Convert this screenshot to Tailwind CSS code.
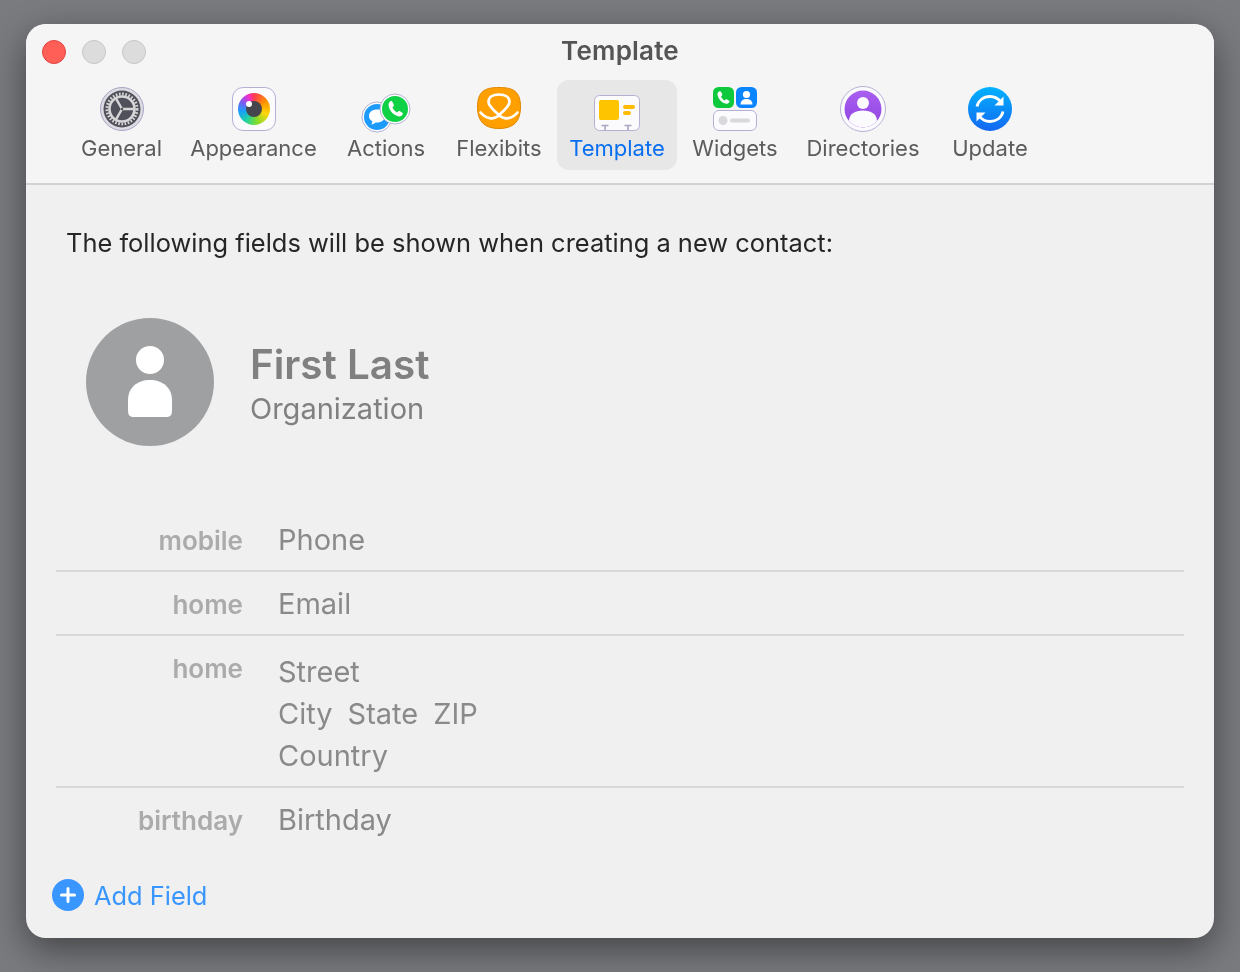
<!DOCTYPE html>
<html lang="en">
<head>
    <meta charset="UTF-8">
    <title>Template</title>
    <script src="https://cdn.jsdelivr.net/npm/@tailwindcss/browser@4"></script>
</head>
<body class="bg-[#7a7b7f] h-[972px] overflow-hidden pt-[24px] pl-[26px] [font-family:Inter,sans-serif]">
    <div class="w-[1188px] h-[914px] bg-[#f0f0f0] rounded-[20px] overflow-hidden shadow-[0_12px_36px_rgba(0,0,0,0.45)] flex flex-col will-change-transform">

        <!-- Title bar + toolbar -->
        <div class="h-[161px] bg-[#f5f5f5] border-b-2 border-[#d2d2d2]">
            <div class="h-[56px] grid grid-cols-[1fr_auto_1fr] items-center pb-[2px]">
                <div class="flex gap-[16px] pl-[16px] pt-[2px]">
                    <span class="w-[24px] h-[24px] rounded-full bg-[#ff5f57] border border-[#e0443e]"></span>
                    <span class="w-[24px] h-[24px] rounded-full bg-[#dcdcdc] border border-[#c6c6c6]"></span>
                    <span class="w-[24px] h-[24px] rounded-full bg-[#dcdcdc] border border-[#c6c6c6]"></span>
                </div>
                <h1 class="text-[26px] font-semibold text-[#555555] leading-none tracking-[0.2px]">Template</h1>
                <div></div>
            </div>

            <!-- Toolbar -->
            <div class="flex pl-[40px] text-[22px] leading-[24px] text-[#5c5c5c]">
                <div class="w-[111px] h-[90px] pt-[5px] flex flex-col items-center">
                    <svg width="48" height="48" viewBox="0 0 48 48">
                        <circle cx="24" cy="24" r="21.5" fill="#dcdce2" stroke="#a9a6c6" stroke-width="1"/>
                        <circle cx="24" cy="24" r="18.5" fill="#50505a"/>
                        <circle cx="24" cy="24" r="15" fill="none" stroke="#d6d6d8" stroke-width="3" stroke-dasharray="1.6 1.6"/>
                        <circle cx="24" cy="24" r="12.5" fill="none" stroke="#d6d6d8" stroke-width="2.6"/>
                        <path d="M24 24 L37 24 M24 24 L17.5 12.7 M24 24 L17.5 35.3" stroke="#d6d6d8" stroke-width="2.4" fill="none"/>
                        <circle cx="24" cy="24" r="1.2" fill="#50505a"/>
                    </svg>
                    <span class="mt-[3px]">General</span>
                </div>
                <div class="w-[153px] h-[90px] pt-[5px] flex flex-col items-center">
                    <div class="w-[48px] h-[48px] flex items-center justify-center">
                        <div class="relative w-[44px] h-[44px] rounded-[11px] bg-[#fbfbfe] border border-[#b3b0d4] flex items-center justify-center">
                            <div class="w-[32px] h-[32px] rounded-full bg-[conic-gradient(#ff3b4e,#ff9500_60deg,#ffd60a_110deg,#7ddc2e_170deg,#1fd1a5_215deg,#18a0fb_260deg,#7a5cf0_300deg,#f02ed0_335deg,#ff3b4e)] flex items-center justify-center">
                                <div class="w-[16px] h-[16px] rounded-full bg-[#45454d]"></div>
                            </div>
                            <div class="absolute left-[13px] top-[13px] w-[6px] h-[6px] rounded-full bg-white"></div>
                        </div>
                    </div>
                    <span class="mt-[3px]">Appearance</span>
                </div>
                <div class="w-[112px] h-[90px] pt-[5px] flex flex-col items-center">
                    <svg width="56" height="48" viewBox="0 0 56 48">
                        <circle cx="19" cy="32" r="15" fill="#ffffff" stroke="#b3b0d4" stroke-width="1"/>
                        <circle cx="19" cy="32" r="13" fill="#1d9bfb"/>
                        <path d="M11 31 C11 26.5 15 24.5 19 24.5 C23.5 24.5 27 27 27 31 C27 35 23.5 37.5 19 37.5 L17.5 37.5 C16.5 38.8 14.5 39.5 13 39.3 C14 38.4 14.5 37.2 14.3 36.2 C12.3 35.2 11 33.5 11 31 Z" fill="#ffffff"/>
                        <circle cx="37" cy="24" r="15" fill="#ffffff" stroke="#b3b0d4" stroke-width="1"/>
                        <circle cx="37" cy="24" r="13" fill="#0ed145"/>
                        <path d="M32 16.5 C33 15.8 34 16 34.5 17 L35.8 19.7 C36.1 20.4 35.9 21 35.3 21.5 L34.4 22.2 C35.2 24.5 37 26.4 39.2 27.5 L40.1 26.5 C40.6 26 41.2 25.9 41.9 26.2 L44 27.5 C44.9 28 45 29 44.4 29.8 C43.4 31.2 41.8 31.8 40 31.3 C35.4 30 31.5 25.6 30.7 21.3 C30.4 19.3 30.8 17.5 32 16.5 Z" fill="#ffffff"/>
                    </svg>
                    <span class="mt-[3px]">Actions</span>
                </div>
                <div class="w-[114px] h-[90px] pt-[5px] flex flex-col items-center">
                    <svg width="48" height="48" viewBox="0 0 48 48">
                        <path d="M24 2.5 C38 2.5 45.5 6 45.5 22 C45.5 37 38 43.5 24 43.5 C10 43.5 2.5 37 2.5 22 C2.5 6 10 2.5 24 2.5 Z" fill="#ffa000" stroke="#e08600" stroke-width="1"/>
                        <path d="M5.5 27.5 C10 33 19 36 24 30 C17 24 13.5 20 13.5 17 C13.5 12 18 9.5 24 9.5 C30 9.5 34.5 12 34.5 17 C34.5 20 31 24 24 30 C29 36 38 33 42.5 27.5" fill="none" stroke="#ffffff" stroke-width="2.7" stroke-linecap="round"/>
                    </svg>
                    <span class="mt-[3px]">Flexibits</span>
                </div>
                <div class="w-[120px] h-[90px] ml-[1px] pt-[5px] flex flex-col items-center bg-[#e7e7e7] rounded-[12px] text-[#0a6ef0]">
                    <svg width="48" height="48" viewBox="0 0 48 48">
                        <rect x="1.5" y="10.5" width="45" height="35" rx="5" fill="#fbfbfe" stroke="#b3b0d4" stroke-width="1"/>
                        <rect x="6" y="15" width="20" height="20" rx="2" fill="#ffc400"/>
                        <rect x="30" y="20" width="12" height="4" rx="2" fill="#ffbc00"/>
                        <rect x="30" y="26" width="8" height="4" rx="2" fill="#ffbc00"/>
                        <path d="M8.5 40.5 H15.5 M12 40.5 V45 M31.5 40.5 H38.5 M35 40.5 V45" stroke="#a9a6c0" stroke-width="1.6" fill="none"/>
                    </svg>
                    <span class="mt-[3px]">Template</span>
                </div>
                <div class="w-[116px] h-[90px] pt-[5px] flex flex-col items-center">
                    <svg width="48" height="48" viewBox="0 0 48 48">
                        <rect x="2" y="2" width="21" height="21" rx="5.5" fill="#0ec93c"/>
                        <path d="M8 6.5 C9 6 9.8 6.3 10.2 7.1 L11.2 9.3 C11.5 10 11.3 10.5 10.8 10.9 L10 11.6 C10.8 13.4 12 14.7 13.6 15.5 L14.4 14.7 C14.9 14.2 15.4 14.1 16 14.4 L17.8 15.4 C18.6 15.8 18.7 16.6 18.2 17.3 C17.3 18.6 15.9 19.1 14.4 18.6 C10.7 17.5 7.4 13.8 6.6 10.2 C6.3 8.6 6.8 7.2 8 6.5 Z" fill="#ffffff"/>
                        <rect x="25" y="2" width="21" height="21" rx="5.5" fill="#0a84ff"/>
                        <circle cx="35.5" cy="9.5" r="3.6" fill="#ffffff"/>
                        <path d="M29.5 19.5 C29.5 15.8 32.2 14 35.5 14 C38.8 14 41.5 15.8 41.5 19.5 Z" fill="#ffffff"/>
                        <rect x="2.5" y="25.5" width="43" height="20" rx="5.5" fill="#fbfbfe" stroke="#b3b0d4" stroke-width="1"/>
                        <circle cx="12" cy="35.5" r="4.5" fill="#d9d9dd"/>
                        <rect x="19" y="33.5" width="20" height="4" rx="2" fill="#d9d9dd"/>
                    </svg>
                    <span class="mt-[3px]">Widgets</span>
                </div>
                <div class="w-[140px] h-[90px] pt-[5px] flex flex-col items-center">
                    <svg width="48" height="48" viewBox="0 0 48 48">
                        <defs>
                            <clipPath id="dirclip"><circle cx="24" cy="24" r="18.5"/></clipPath>
                            <linearGradient id="dirfill" x1="0" y1="0" x2="0" y2="1"><stop offset="0" stop-color="#a960f0"/><stop offset="1" stop-color="#8f43e0"/></linearGradient>
                        </defs>
                        <circle cx="24" cy="24" r="22.5" fill="#fbfbfe" stroke="#b3b0d4" stroke-width="1"/>
                        <circle cx="24" cy="24" r="18.5" fill="url(#dirfill)"/>
                        <circle cx="24" cy="18" r="6" fill="#fbfbfe"/>
                        <path d="M10 44 L10 36 C10 29 16 25.5 24 25.5 C32 25.5 38 29 38 36 L38 44 Z" fill="#fbfbfe" clip-path="url(#dirclip)"/>
                    </svg>
                    <span class="mt-[3px]">Directories</span>
                </div>
                <div class="w-[114px] h-[90px] pt-[5px] flex flex-col items-center">
                    <svg width="48" height="48" viewBox="0 0 48 48">
                        <defs>
                            <linearGradient id="upd" x1="0" y1="0" x2="0" y2="1"><stop offset="0" stop-color="#00b2ff"/><stop offset="1" stop-color="#1468f0"/></linearGradient>
                        </defs>
                        <circle cx="24" cy="24" r="22" fill="url(#upd)"/>
                        <path d="M11 21.5 C12.2 15.5 17.5 11.5 24 11.5 C28.5 11.5 32.3 13.5 34.8 17" fill="none" stroke="#ffffff" stroke-width="2.8"/>
                        <path d="M37 26.5 C35.8 32.5 30.5 36.5 24 36.5 C19.5 36.5 15.7 34.5 13.2 31" fill="none" stroke="#ffffff" stroke-width="2.8"/>
                        <path d="M37.5 11.5 L37.5 20.5 L28.5 20.5 Z" fill="#ffffff"/>
                        <path d="M10.5 36.5 L10.5 27.5 L19.5 27.5 Z" fill="#ffffff"/>
                    </svg>
                    <span class="mt-[3px]">Update</span>
                </div>
            </div>
        </div>

        <!-- Content -->
        <div class="flex-1 px-[30px]">
            <p class="ml-[10px] mt-[43px] text-[25.45px] leading-[30px] text-[#262626]">The following fields will be shown when creating a new contact:</p>

            <div class="flex items-center ml-[30px] mt-[60px] gap-[36px]">
                <div class="w-[128px] h-[128px] rounded-full bg-[#9fa0a2] flex items-center justify-center">
                    <svg width="128" height="128" viewBox="0 0 128 128">
                        <circle cx="64" cy="42" r="14" fill="#ffffff"/>
                        <path d="M42 92 L42 82 C42 70 51 62 64 62 C77 62 86 70 86 82 L86 92 C86 96.5 85 99 80 99 L48 99 C43 99 42 96.5 42 92 Z" fill="#ffffff"/>
                    </svg>
                </div>
                <div class="mt-[4px]">
                    <div class="text-[40.4px] leading-[50px] font-semibold text-[#808080]">First Last</div>
                    <div class="text-[29px] leading-[38px] text-[#808080]">Organization</div>
                </div>
            </div>

            <div class="mt-[62px] text-[29px] text-[#8a8a8a]">
                <div class="h-[64px] pt-[2px] flex items-center border-b-2 border-[#d8d8d8]">
                    <span class="w-[187px] text-right text-[26px] font-semibold text-[#ababab]">mobile</span>
                    <span class="ml-[35px]">Phone</span>
                </div>
                <div class="h-[64px] pt-[2px] flex items-center border-b-2 border-[#d8d8d8]">
                    <span class="w-[187px] text-right text-[26px] font-semibold text-[#ababab]">home</span>
                    <span class="ml-[35px]">Email</span>
                </div>
                <div class="h-[152px] flex items-start pt-[15px] border-b-2 border-[#d8d8d8]">
                    <span class="w-[187px] text-right text-[26px] leading-[36px] font-semibold text-[#ababab]">home</span>
                    <div class="ml-[35px] leading-[42px]">
                        <div>Street</div>
                        <div class="flex gap-[15px]"><span>City</span><span>State</span><span>ZIP</span></div>
                        <div>Country</div>
                    </div>
                </div>
                <div class="h-[64px] flex items-center">
                    <span class="w-[187px] text-right text-[26px] font-semibold text-[#ababab]">birthday</span>
                    <span class="ml-[35px]">Birthday</span>
                </div>
            </div>

            <div class="flex items-center gap-[10px] -ml-[4px] mt-[26px]">
                <svg width="32" height="32" viewBox="0 0 32 32">
                    <circle cx="16" cy="16" r="16" fill="#3a96ff"/>
                    <path d="M16 9.5 V22.5 M9.5 16 H22.5" stroke="#ffffff" stroke-width="3" stroke-linecap="round"/>
                </svg>
                <span class="text-[25.4px] leading-[32px] pt-[2px] text-[#3a96ff]">Add Field</span>
            </div>
        </div>
    </div>
</body>
</html>
